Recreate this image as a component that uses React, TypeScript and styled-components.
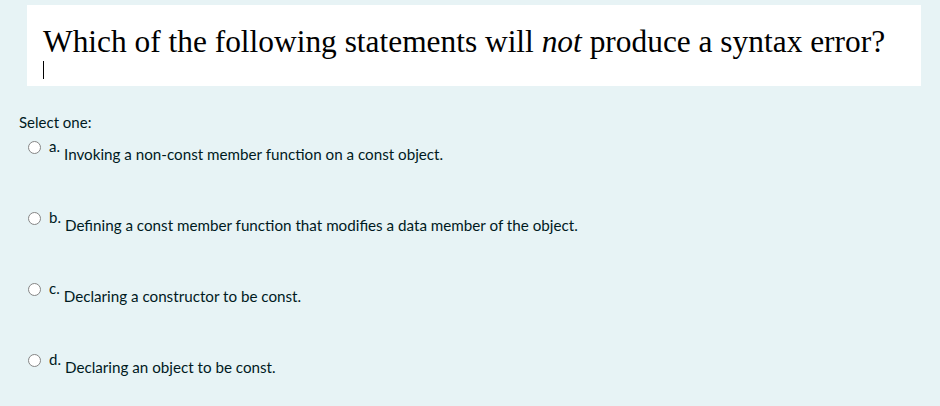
import styled, { createGlobalStyle } from "styled-components";

const GlobalStyle = createGlobalStyle`
  html, body {
    margin: 0;
    padding: 0;
    background: #e7f3f5;
  }
`;

const options = [
  { letter: "a.", text: "Invoking a non-const member function on a const object." },
  {
    letter: "b.",
    text: "Defining a const member function that modifies a data member of the object.",
  },
  { letter: "c.", text: "Declaring a constructor to be const." },
  { letter: "d.", text: "Declaring an object to be const." },
];

const App = () => {
  return (
    <Page>
      <GlobalStyle />
      <QuestionText>
        <Heading>
          Which of the following statements will <em>not</em> produce a syntax
          error?
        </Heading>
        <CaretLine>
          <Caret />
        </CaretLine>
      </QuestionText>
      <Prompt>Select one:</Prompt>
      <Answers>
        {options.map((o) => (
          <Option key={o.letter}>
            <Radio />
            <Letter>{o.letter}</Letter>
            <AnswerText>{o.text}</AnswerText>
          </Option>
        ))}
      </Answers>
    </Page>
  );
};

export default App;

const Page = styled.div`
  width: 940px;
  height: 406px;
  box-sizing: border-box;
  padding: 5px 19px 0 19px;
  background: #e7f3f5;
  color: #001a1e;
  font-family: Lato, "Open Sans", sans-serif;
`;

const QuestionText = styled.div`
  margin-left: 8px;
  height: 81px;
  box-sizing: border-box;
  padding: 20px 16px 0;
  background: #ffffff;
`;

const Heading = styled.div`
  font-family: "Liberation Serif", "Times New Roman", serif;
  font-size: 31.4px;
  line-height: 34px;
  color: #000;

  em {
    font-style: italic;
  }
`;

const CaretLine = styled.div`
  height: 20px;
  display: flex;
  align-items: flex-start;
`;

const Caret = styled.span`
  display: block;
  width: 1px;
  height: 18px;
  margin-top: 2px;
  background: #000;
`;

const Prompt = styled.div`
  margin-top: 27px;
  font-size: 15px;
  line-height: 18px;
`;

const Answers = styled.div`
  display: flex;
  flex-direction: column;
  gap: 53px;
  margin-top: 6px;
  padding-left: 9px;
`;

const Option = styled.div`
  display: flex;
  align-items: flex-start;
  height: 18px;
`;

const Radio = styled.span`
  flex: none;
  width: 13px;
  height: 13px;
  box-sizing: border-box;
  border-radius: 50%;
  border: 1px solid #858585;
  background: #ffffff;
  margin-top: 4px;
  margin-right: 8px;
`;

const Letter = styled.span`
  font-size: 15px;
  line-height: 14px;
  margin-top: 2px;
  margin-right: 4px;
`;

const AnswerText = styled.span`
  font-size: 15.2px;
  line-height: 14px;
  margin-top: 9.5px;
`;
